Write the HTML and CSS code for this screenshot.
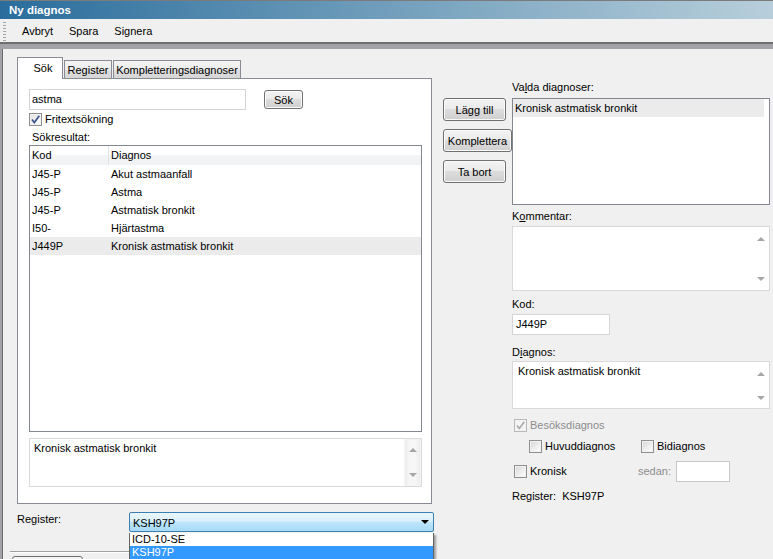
FILE: index.html
```html
<!DOCTYPE html>
<html lang="sv">
<head>
<meta charset="utf-8">
<title>Ny diagnos</title>
<link rel="stylesheet" href="styles.css">
</head>
<body>
<div class="titlebar">Ny diagnos</div>
<div class="toolbar">
  <span class="grip"></span>
  <span class="tb-item">Avbryt</span>
  <span class="tb-item">Spara</span>
  <span class="tb-item">Signera</span>
</div>
<div class="frame">
  <div class="client">
    <div class="left">
      <div class="tabs">
        <div class="tab tab-active">Sök</div>
        <div class="tab tab-register">Register</div>
        <div class="tab tab-kompl">Kompletteringsdiagnoser</div>
      </div>
      <div class="panel">
        <div class="search-row">
          <div class="textbox search-input">astma</div>
          <button class="btn btn-sok">Sök</button>
        </div>
        <div class="check-row">
          <span class="cb checked"><svg viewBox="0 0 11 11" width="11" height="11"><path d="M2 5.5 L4.3 8.5 L9.3 1.8" fill="none" stroke="#3b5488" stroke-width="1.7"/></svg></span>
          <span class="cb-label">Fritextsökning</span>
        </div>
        <div class="caption">Sökresultat:</div>
        <div class="listview">
          <div class="lv-header">
            <div class="col-kod">Kod</div>
            <div class="col-diag">Diagnos</div>
          </div>
          <div class="lv-row"><div class="col-kod">J45-P</div><div class="col-diag">Akut astmaanfall</div></div>
          <div class="lv-row"><div class="col-kod">J45-P</div><div class="col-diag">Astma</div></div>
          <div class="lv-row"><div class="col-kod">J45-P</div><div class="col-diag">Astmatisk bronkit</div></div>
          <div class="lv-row"><div class="col-kod">I50-</div><div class="col-diag">Hjärtastma</div></div>
          <div class="lv-row lv-selected"><div class="col-kod">J449P</div><div class="col-diag">Kronisk astmatisk bronkit</div></div>
        </div>
        <div class="memo desc">
          <div class="memo-text">Kronisk astmatisk bronkit</div>
          <div class="vscroll"><span class="arr-up"></span><span class="arr-down"></span></div>
        </div>
      </div>
      <div class="register-row">
        <div class="reg-label">Re<u>g</u>ister:</div>
        <div class="combo">
          <span class="combo-text">KSH97P</span>
          <span class="combo-arrow"></span>
          <div class="dropdown">
            <div class="dd-item">ICD-10-SE</div>
            <div class="dd-item dd-selected">KSH97P</div>
          </div>
        </div>
      </div>
      <div class="bottom-bar">
        <div class="bottom-line"></div>
        <div class="bottom-btn"></div>
      </div>
    </div>
    <div class="mid">
      <button class="btn btn-mid btn-add">Lägg till</button>
      <button class="btn btn-mid btn-kompl">Komplettera</button>
      <button class="btn btn-mid btn-add">Ta bort</button>
    </div>
    <div class="right">
      <div class="lbl">Va<u>l</u>da diagnoser:</div>
      <div class="listbox">
        <div class="lb-item">Kronisk astmatisk bronkit</div>
      </div>
      <div class="lbl lbl-kommentar">K<u>o</u>mmentar:</div>
      <div class="memo kommentar">
        <div class="memo-text"></div>
        <div class="vscroll plain"><span class="arr-up"></span><span class="arr-down"></span></div>
      </div>
      <div class="lbl lbl-kod">Kod:</div>
      <div class="textbox kod-input">J449P</div>
      <div class="lbl lbl-diag">D<u>i</u>agnos:</div>
      <div class="memo diagnos">
        <div class="memo-text">Kronisk astmatisk bronkit</div>
        <div class="vscroll plain"><span class="arr-up"></span><span class="arr-down"></span></div>
      </div>
      <div class="opt-row besok">
        <span class="cb checked disabled"><svg viewBox="0 0 11 11" width="11" height="11"><path d="M2 5.5 L4.3 8.5 L9.3 1.8" fill="none" stroke="#a9a9a9" stroke-width="1.6"/></svg></span>
        <span class="cb-label grey">Besöksdiagnos</span>
      </div>
      <div class="opt-row sub">
        <div class="opt-item huvud"><span class="cb"></span><span class="cb-label">Huvuddiagnos</span></div>
        <div class="opt-item"><span class="cb"></span><span class="cb-label">Bidiagnos</span></div>
      </div>
      <div class="opt-row kronisk">
        <div class="opt-item kron"><span class="cb"></span><span class="cb-label">Kronisk</span></div>
        <span class="sedan">sedan:</span>
        <div class="textbox sedan-input"></div>
      </div>
      <div class="lbl reg-info">Register:&nbsp; KSH97P</div>
    </div>
  </div>
</div>
</body>
</html>
```
FILE: styles.css
```css
* { box-sizing: border-box; }
html, body { margin: 0; padding: 0; }
body {
  width: 773px;
  height: 559px;
  overflow: hidden;
  background: #f0f0f0;
  font-family: "Liberation Sans", Arial, sans-serif;
  font-size: 11px;
  color: #000;
}
u { text-decoration: underline; text-underline-offset: 1px; }

.titlebar {
  height: 19px;
  border-top: 1px solid #7b7b7b;
  background: linear-gradient(to right, #2a6d9c, #b8cfdb);
  color: #fff;
  font-weight: bold;
  font-size: 11.5px;
  line-height: 18px;
  padding-left: 9px;
}

.toolbar {
  height: 23px;
  display: flex;
  align-items: center;
  gap: 16px;
  padding: 1px 0 0 3px;
}
.grip {
  width: 3px;
  height: 19px;
  background: repeating-linear-gradient(to bottom, #a5a5a5 0 1px, transparent 1px 3px);
}
.tb-item { line-height: 14px; }

.frame {
  height: 517px;
  border-top: 2px solid #6f6f6f;
  background: #a3a2a9;
  padding: 5px 0 0 2px;
}
.client {
  height: 100%;
  border-left: 1px solid #6b6b6b;
  background: #f0f0f0;
  display: flex;
}

/* left column */
.left {
  width: 417px;
  margin-left: 14px;
  padding-top: 8px;
  flex: none;
}
.tabs {
  display: flex;
  align-items: flex-end;
  height: 22px;
  margin-bottom: -1px;
  position: relative;
  z-index: 1;
}
.tab {
  height: 18px;
  margin-bottom: 1px;
  margin-right: 1px;
  border: 1px solid #898c95;
  border-bottom: none;
  background: linear-gradient(#f4f4f4, #ebebeb 50%, #dedede 51%, #d6d6d6);
  line-height: 17px;
  text-align: center;
  padding-top: 1px;
}
.tab-active {
  height: 22px;
  margin-bottom: 0;
  width: 46px;
  background: #fff;
  padding: 1px 0 0 6px;
  line-height: 18px;
}
.tab-register { width: 48px; }
.tab-kompl { width: 128px; }

.panel {
  height: 426px;
  width: 415px;
  border: 1px solid #898c95;
  background: #fff;
  padding: 10px 9px 0 11px;
}
.textbox {
  border: 1px solid #d5d5d5;
  background: #fff;
  line-height: 19px;
  padding-left: 2px;
}
.search-row {
  display: flex;
  align-items: center;
  height: 21px;
}
.search-input { width: 217px; height: 21px; }

.btn {
  font: inherit;
  color: #000;
  padding: 0;
  border: 1px solid #707070;
  border-radius: 3px;
  background: linear-gradient(#f3f3f3, #ebebeb 45%, #dddddd 50%, #cfcfcf);
  box-shadow: inset 0 0 0 1px #fbfbfb;
  display: flex;
  align-items: center;
  justify-content: center;
  flex: none;
}
.btn-sok { margin-left: 18px; width: 39px; height: 19px; }

.check-row {
  display: flex;
  align-items: center;
  height: 13px;
  margin-top: 3px;
}
.cb {
  width: 13px;
  height: 13px;
  flex: none;
  border: 1px solid #8e8f8f;
  background: linear-gradient(135deg, #d6d6d6, #f8f8f8 80%);
  box-shadow: inset 0 0 0 1px #f2f2f2;
  display: flex;
  align-items: center;
  justify-content: center;
}
.cb.checked { background: linear-gradient(135deg, #e0e0e0, #fafafa 80%); }
.cb.disabled {
  border-color: #b9b9b9;
  background: #f4f4f4;
}
.cb svg { display: block; }
.cb-label { margin-left: 3px; line-height: 13px; white-space: nowrap; }
.cb-label.grey { color: #8d8d8d; }

.caption {
  margin-top: 5px;
  line-height: 13px;
  padding-left: 3px;
}

.listview {
  margin-top: 1px;
  width: 393px;
  height: 287px;
  border: 1px solid #828790;
  background: #fff;
}
.lv-header {
  display: flex;
  height: 19px;
  line-height: 19px;
  background: linear-gradient(#ffffff 0, #ffffff 45%, #f3f4f6 50%, #f1f2f4 100%);
}
.lv-header .col-kod { border-right: 1px solid #e2e3e6; }
.col-kod { width: 79px; padding-left: 2px; flex: none; }
.col-diag { padding-left: 2px; }
.lv-row { display: flex; height: 18px; line-height: 18px; }
.lv-selected { background: #ebebeb; }

.memo {
  display: flex;
  border: 1px solid #d9d9d9;
  background: #fff;
}
.memo-text { flex: 1; line-height: 13px; }
.desc { margin-top: 6px; width: 393px; height: 49px; }
.desc .memo-text { padding: 3px 0 0 4px; }
.vscroll {
  width: 17px;
  flex: none;
  background: linear-gradient(to right, #ececec, #f6f6f6 30%, #f6f6f6 70%, #ececec);
  border: 1px solid #f4f4f4;
  display: flex;
  flex-direction: column;
  align-items: center;
  justify-content: space-between;
  padding: 8px 0 8px;
}
.vscroll.plain { background: #fff; border-color: #fff; }
.arr-up {
  width: 0; height: 0;
  border-left: 4px solid transparent;
  border-right: 4px solid transparent;
  border-bottom: 4px solid #a6a6a6;
}
.arr-down {
  width: 0; height: 0;
  border-left: 4px solid transparent;
  border-right: 4px solid transparent;
  border-top: 4px solid #a6a6a6;
}

.register-row {
  display: flex;
  margin-top: 8px;
  height: 20px;
  position: relative;
  z-index: 2;
}
.reg-label { width: 112px; line-height: 14px; flex: none; }
.combo {
  position: relative;
  width: 305px;
  height: 20px;
  border: 1px solid #3c7fb1;
  border-radius: 2px;
  background: linear-gradient(#eaf6fd, #d9f0fc 45%, #bee6fd 50%, #a7d9f5);
  display: flex;
  align-items: center;
  padding-left: 3px;
}
.combo-text { flex: 1; line-height: 16px; padding-top: 1px; }
.combo-arrow {
  width: 0; height: 0;
  margin-right: 4px;
  border-left: 4px solid transparent;
  border-right: 4px solid transparent;
  border-top: 4px solid #000;
}
.dropdown {
  position: absolute;
  top: 20px;
  left: -1px;
  width: 305px;
  border: 1px solid #646464;
  border-top: none;
  background: #fff;
  box-shadow: 2px 2px 2px rgba(0,0,0,0.35);
}
.dd-item { height: 13px; line-height: 13px; padding-left: 2px; }
.dd-selected { background: #3399ff; color: #fff; }

.bottom-bar { margin: 19px 0 0 -7px; }
.bottom-line {
  width: 424px;
  height: 2px;
  border-top: 1px solid #a0a0a0;
  border-bottom: 1px solid #fff;
}
.bottom-btn {
  margin: 3px 0 0 2px;
  width: 71px;
  height: 22px;
  border: 1px solid #707070;
  border-radius: 3px;
  background: linear-gradient(#f3f3f3, #ebebeb);
}

/* middle column */
.mid {
  width: 69px;
  margin-left: 9px;
  padding-top: 49px;
  display: flex;
  flex-direction: column;
  gap: 8px;
  flex: none;
}
.btn-mid { height: 23px; }
.btn-add { width: 63px; }
.btn-kompl { width: 69px; }

/* right column */
.right {
  width: 258px;
  padding-top: 32px;
  flex: none;
}
.lbl { line-height: 13px; white-space: nowrap; }
.listbox {
  margin-top: 4px;
  height: 107px;
  border: 1px solid #828790;
  background: #fff;
}
.lb-item {
  height: 18px;
  line-height: 18px;
  margin-right: 5px;
  padding-left: 2px;
  background: #ebebeb;
}
.lbl-kommentar { margin-top: 5px; }
.kommentar { margin-top: 3px; height: 65px; }
.lbl-kod { margin-top: 7px; }
.kod-input { margin-top: 3px; width: 98px; height: 21px; padding-left: 3px; }
.lbl-diag { margin-top: 11px; }
.diagnos { margin-top: 2px; height: 48px; }
.diagnos .memo-text { padding: 3px 0 0 5px; }
.diagnos .vscroll { padding: 9px 0 7px; }
.kommentar .vscroll { padding: 9px 0 8px; }

.opt-row { display: flex; align-items: center; }
.besok { margin-top: 10px; height: 13px; padding-left: 2px; }
.sub { margin-top: 8px; height: 13px; padding-left: 17px; }
.opt-item { display: flex; align-items: center; }
.huvud { width: 112px; }
.kronisk { margin-top: 8px; height: 21px; padding-left: 2px; }
.kron { width: 124px; }
.sedan { width: 38px; color: #8d8d8d; line-height: 13px; }
.sedan-input { width: 54px; height: 21px; border-color: #c8c8c8; }
.reg-info { margin-top: 8px; }
```
